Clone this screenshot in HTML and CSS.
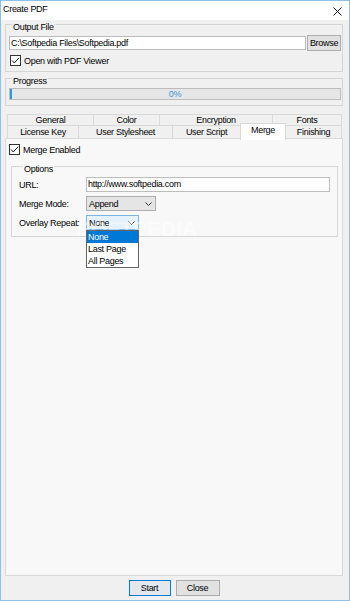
FILE: index.html
```html
<!DOCTYPE html>
<html lang="en">
<head>
  <meta charset="UTF-8" />
  <title>Create PDF</title>
  <link rel="stylesheet" href="styles.css">
</head>
<body>

<div class="window">
  <div class="titlebar">
    <span class="title">Create PDF</span>
    <svg class="close-icon" width="9" height="9" viewBox="0 0 9 9">
      <path d="M0.5 0.5L8.5 8.5M8.5 0.5L0.5 8.5" stroke="#1a1a1a" stroke-width="1" fill="none"/>
    </svg>
  </div>

  <div class="client">
    <!-- Output File -->
    <div class="group output-group">
      <div class="group-title">Output File</div>
      <div class="file-row">
        <div class="textbox file-box">C:\Softpedia Files\Softpedia.pdf</div>
        <button class="btn browse-btn">Browse</button>
      </div>
      <div class="check-row output-check">
        <svg class="checkbox" width="11" height="11" viewBox="0 0 11 11">
          <rect x="0.5" y="0.5" width="10" height="10" fill="#fff" stroke="#333"/>
          <path d="M2 5.5L4.3 8L9 2.8" stroke="#222" stroke-width="1" fill="none"/>
        </svg>
        <span>Open with PDF Viewer</span>
      </div>
    </div>

    <!-- Progress -->
    <div class="group progress-group">
      <div class="group-title">Progress</div>
      <div class="progress-bar">0%</div>
    </div>

    <!-- Tabs -->
    <div class="tabs">
      <div class="tab-row row-top">
        <div class="tab">General</div>
        <div class="tab">Color</div>
        <div class="tab">Encryption</div>
        <div class="tab">Fonts</div>
      </div>
      <div class="tab-row row-bottom">
        <div class="tab">License Key</div>
        <div class="tab">User Stylesheet</div>
        <div class="tab">User Script</div>
        <div class="tab active">Merge</div>
        <div class="tab">Finishing</div>
      </div>
    </div>

    <div class="tab-panel">
      <div class="check-row">
        <svg class="checkbox" width="11" height="11" viewBox="0 0 11 11">
          <rect x="0.5" y="0.5" width="10" height="10" fill="#fff" stroke="#333"/>
          <path d="M2 5.5L4.3 8L9 2.8" stroke="#222" stroke-width="1" fill="none"/>
        </svg>
        <span>Merge Enabled</span>
      </div>

      <div class="group options-group">
        <div class="group-title panel-title">Options</div>

        <div class="field-row">
          <span class="field-label">URL:</span>
          <div class="textbox url-box">http://www.softpedia.com</div>
        </div>

        <div class="field-row">
          <span class="field-label">Merge Mode:</span>
          <div class="combo combo-mode">
            <span>Append</span>
            <svg width="7" height="4" viewBox="0 0 7 4"><path d="M0.5 0.5L3.5 3.5L6.5 0.5" stroke="#333" fill="none"/></svg>
          </div>
        </div>

        <div class="field-row">
          <span class="field-label">Overlay Repeat:</span>
          <div class="combo combo-repeat">
            <span>None</span>
            <svg width="7" height="4" viewBox="0 0 7 4"><path d="M0.5 0.5L3.5 3.5L6.5 0.5" stroke="#333" fill="none"/></svg>
            <div class="dropdown">
              <div class="option selected">None</div>
              <div class="option">Last Page</div>
              <div class="option">All Pages</div>
            </div>
          </div>
        </div>
      </div>
    </div>

    <div class="footer">
      <button class="btn start-btn">Start</button>
      <button class="btn close-btn">Close</button>
    </div>
  </div>

  <div class="watermark">SOFTPEDIA<sup>®</sup></div>
</div>

</body>
</html>
```

FILE: styles.css
```css
body {
  margin: 0;
  font-family: "Liberation Sans", Arial, sans-serif;
  font-size: 9px;
  letter-spacing: -0.3px;
  line-height: 12px;
  color: #000;
  background: #f0f0f0;
}

.window {
  position: relative;
  width: 350px;
  height: 601px;
  box-sizing: border-box;
  border: 1px solid #8dc1ea;
  background: #f0f0f0;
  display: flex;
  flex-direction: column;
  overflow: hidden;
}

.titlebar {
  flex: none;
  height: 19px;
  box-sizing: border-box;
  padding: 2px 7px 0 2px;
  background: #fff;
  display: flex;
  align-items: flex-start;
  justify-content: space-between;
}

.close-icon {
  margin-top: 4px;
}

.client {
  flex: 1;
  min-height: 0;
  display: flex;
  flex-direction: column;
  padding: 4px 6px 0 4px;
}

/* group boxes */
.group {
  flex: none;
  border: 1px solid #d6d6d6;
}

.group-title {
  width: fit-content;
  margin: -4px 0 0 3px;
  padding: 0 1px;
  background: #f0f0f0;
}

.output-group {
  padding: 0 1px 5px 3px;
}

.file-row {
  display: flex;
  align-items: center;
  gap: 1px;
  margin-top: 2px;
}

.textbox {
  height: 14px;
  box-sizing: border-box;
  border: 1px solid #bdbdbd;
  background: #fff;
  padding: 0 1px;
  white-space: nowrap;
  overflow: hidden;
}

.file-box {
  flex: 1;
}

.btn {
  font: inherit;
  letter-spacing: inherit;
  color: #000;
  height: 16px;
  box-sizing: border-box;
  border: 1px solid #adadad;
  background: #e1e1e1;
  padding: 0;
  line-height: 14px;
}

.browse-btn {
  width: 34px;
}

.check-row {
  display: flex;
  align-items: center;
  gap: 3px;
  height: 11px;
}

.checkbox {
  flex: none;
}

.output-check {
  margin: 4px 0 0 1px;
}

.progress-group {
  margin-top: 6px;
  padding: 0 1px 5px 3px;
}

.progress-bar {
  margin-top: 1px;
  height: 12px;
  box-sizing: border-box;
  border: 1px solid #bcbcbc;
  background: linear-gradient(#2b9be0, #2b9be0) no-repeat 0 0 / 2px 100%, #e6e6e6;
  color: #3d95e0;
  text-align: center;
  line-height: 10px;
}

/* tabs */
.tabs {
  flex: none;
  margin-top: 8px;
  padding-left: 2px;
}

.tab-row {
  display: grid;
}

.row-top {
  grid-template-columns: 87px 66px 113px 69px;
}

.row-bottom {
  grid-template-columns: 72px 94px 68px 45px 56px;
  margin-top: -1px;
}

.tab {
  border: 1px solid #d9d9d9;
  border-left: none;
  border-bottom: none;
  background: #f0f0f0;
  text-align: center;
  white-space: nowrap;
}

.tab:first-child {
  border-left: 1px solid #d9d9d9;
}

.row-top .tab {
  line-height: 11px;
}

.row-bottom .tab {
  line-height: 13px;
}

.tab.active {
  position: relative;
  z-index: 1;
  margin: -2px 0 -1px -1px;
  border-left: 1px solid #d9d9d9;
  background: #fff;
}

.tab-panel {
  flex: 1;
  margin-top: -1px;
  border: 1px solid #d9d9d9;
  background: #f8f8f8;
  padding: 5px 4px 0 3px;
}

.options-group {
  margin: 11px 0 0 2px;
  padding: 0 7px 6px 7px;
}

.panel-title {
  margin-left: 4px;
  background: #f8f8f8;
}

.field-row {
  display: flex;
  align-items: center;
  height: 15px;
  margin-top: 4px;
}

.panel-title + .field-row {
  margin-top: 2px;
}

.field-label {
  flex: none;
  width: 67px;
  white-space: nowrap;
}

.url-box {
  flex: 1;
  height: 15px;
  line-height: 13px;
}

.combo {
  position: relative;
  height: 15px;
  box-sizing: border-box;
  border: 1px solid #adadad;
  background: #e5e5e5;
  padding: 0 3px 0 2px;
  display: flex;
  align-items: center;
  justify-content: space-between;
}

.combo-mode {
  width: 70px;
}

.combo-repeat {
  width: 53px;
  background: #e5f1fb;
  border-color: #7eb4ea;
}

.dropdown {
  position: absolute;
  left: -1px;
  top: 14px;
  z-index: 2;
  width: 53px;
  box-sizing: border-box;
  border: 1px solid #646464;
  background: #fff;
}

.option {
  height: 12px;
  padding-left: 1px;
}

.option.selected {
  background: #0078d7;
  color: #fff;
}

.footer {
  flex: none;
  display: flex;
  justify-content: center;
  gap: 5px;
  padding: 4px 0;
}

.start-btn {
  width: 42px;
  border-color: #0078d7;
  background: #e3e8ee;
}

.close-btn {
  width: 44px;
}

.watermark {
  position: absolute;
  left: 76px;
  top: 213px;
  z-index: 1;
  pointer-events: none;
  font-family: "Liberation Sans", Arial, sans-serif;
  font-weight: bold;
  font-size: 21px;
  letter-spacing: 0;
  line-height: 24px;
  color: rgba(255, 255, 255, 0.45);
}

.watermark sup {
  font-size: 8px;
}
```
